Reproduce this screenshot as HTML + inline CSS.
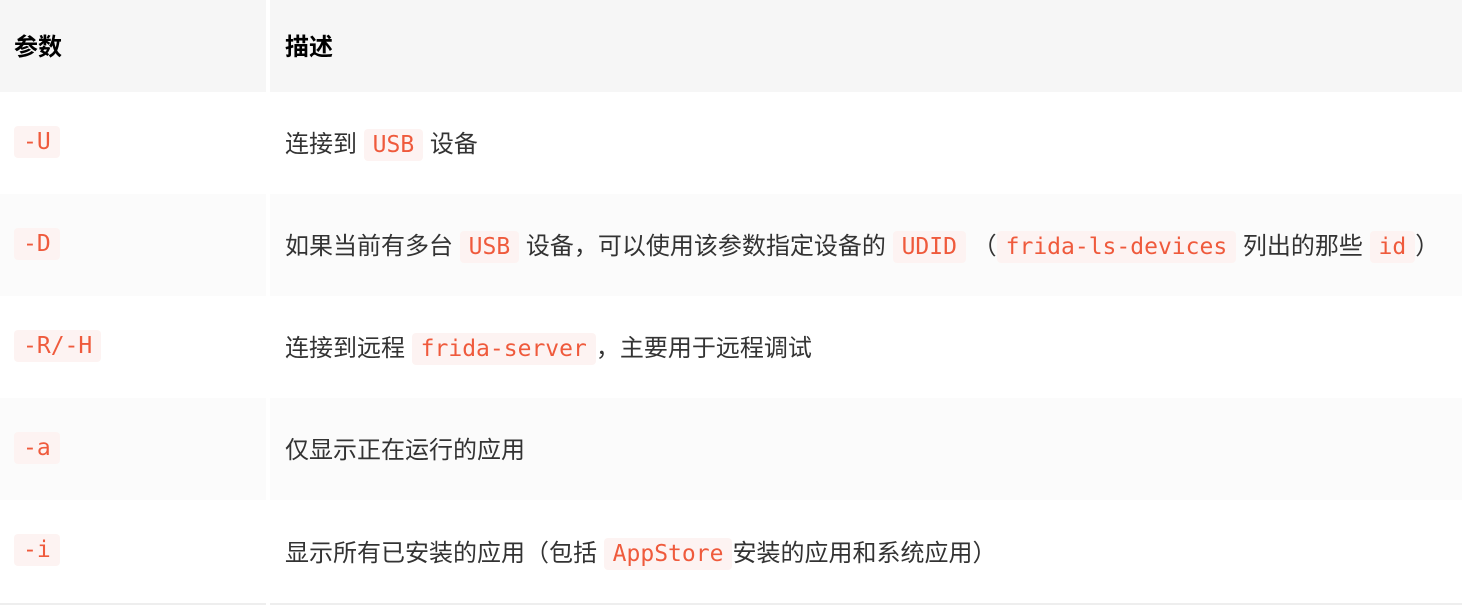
<!DOCTYPE html>
<html><head><meta charset="utf-8"><style>
body{margin:0;background:#fff;width:1462px;height:606px;overflow:hidden;font-family:"Liberation Sans","Noto Sans CJK SC",sans-serif;color:#333;}
table{border-collapse:collapse;width:1462px;table-layout:fixed;}
td,th{padding:0 0 3px 14px;text-align:left;font-size:24px;white-space:nowrap;}
th{height:89px;background:#f6f6f6;font-weight:bold;color:#000;}
th+th,td+td{border-left:4px solid #fff;padding-left:15px;}
tr.g td{background:#fbfbfb;}
td{height:99px;}
tr:last-child td{height:100px;border-bottom:2px solid #eee;}
code{font-family:"DejaVu Sans Mono","Liberation Mono",monospace;font-size:23px;color:#ef5a3c;background:#fdf3f2;border-radius:4px;padding:3px 9px;}
</style></head><body>
<table>
<colgroup><col style="width:268px"><col></colgroup>
<tr><th>参数</th><th>描述</th></tr>
<tr><td><code>-U</code></td><td>连接到 <code>USB</code> 设备</td></tr>
<tr class="g"><td><code>-D</code></td><td>如果当前有多台 <code>USB</code> 设备，可以使用该参数指定设备的 <code>UDID</code> （<code>frida-ls-devices</code> 列出的那些 <code>id</code>）</td></tr>
<tr><td><code>-R/-H</code></td><td>连接到远程 <code>frida-server</code>，主要用于远程调试</td></tr>
<tr class="g"><td><code>-a</code></td><td>仅显示正在运行的应用</td></tr>
<tr><td><code>-i</code></td><td>显示所有已安装的应用（包括 <code>AppStore</code>安装的应用和系统应用）</td></tr>
</table>
</body></html>
